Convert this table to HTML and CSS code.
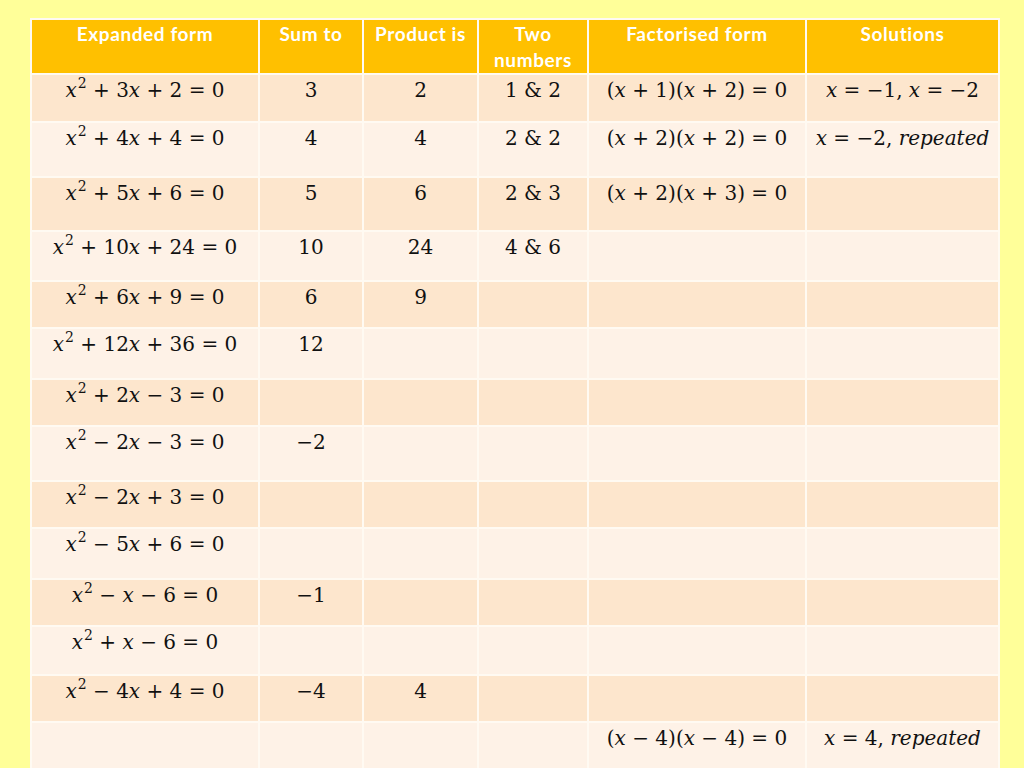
FILE: index.html
```html
<!DOCTYPE html>
<html>
<head>
<meta charset="utf-8">
<link rel="stylesheet" href="styles.css">
</head>
<body>
<table class="grid">
  <colgroup>
    <col class="c-exp"><col class="c-sum"><col class="c-prod"><col class="c-two"><col class="c-fact"><col class="c-sol">
  </colgroup>
  <thead>
    <tr class="head">
      <th>Expanded form</th><th>Sum to</th><th>Product is</th><th>Two numbers</th><th>Factorised form</th><th>Solutions</th>
    </tr>
  </thead>
  <tbody>
    <tr class="dark r1">
      <td><i>x</i><sup>2</sup> + 3<i>x</i> + 2 = 0</td><td>3</td><td>2</td><td>1 &amp; 2</td>
      <td>(<i>x</i> + 1)(<i>x</i> + 2) = 0</td><td><i>x</i> = −1, <i>x</i> = −2</td>
    </tr>
    <tr class="light r2">
      <td><i>x</i><sup>2</sup> + 4<i>x</i> + 4 = 0</td><td>4</td><td>4</td><td>2 &amp; 2</td>
      <td>(<i>x</i> + 2)(<i>x</i> + 2) = 0</td><td><i>x</i> = −2, <i>repeated</i></td>
    </tr>
    <tr class="dark r3">
      <td><i>x</i><sup>2</sup> + 5<i>x</i> + 6 = 0</td><td>5</td><td>6</td><td>2 &amp; 3</td>
      <td>(<i>x</i> + 2)(<i>x</i> + 3) = 0</td><td></td>
    </tr>
    <tr class="light r4">
      <td><i>x</i><sup>2</sup> + 10<i>x</i> + 24 = 0</td><td>10</td><td>24</td><td>4 &amp; 6</td><td></td><td></td>
    </tr>
    <tr class="dark r5">
      <td><i>x</i><sup>2</sup> + 6<i>x</i> + 9 = 0</td><td>6</td><td>9</td><td></td><td></td><td></td>
    </tr>
    <tr class="light r6">
      <td><i>x</i><sup>2</sup> + 12<i>x</i> + 36 = 0</td><td>12</td><td></td><td></td><td></td><td></td>
    </tr>
    <tr class="dark r7">
      <td><i>x</i><sup>2</sup> + 2<i>x</i> − 3 = 0</td><td></td><td></td><td></td><td></td><td></td>
    </tr>
    <tr class="light r8">
      <td><i>x</i><sup>2</sup> − 2<i>x</i> − 3 = 0</td><td>−2</td><td></td><td></td><td></td><td></td>
    </tr>
    <tr class="dark r9">
      <td><i>x</i><sup>2</sup> − 2<i>x</i> + 3 = 0</td><td></td><td></td><td></td><td></td><td></td>
    </tr>
    <tr class="light r10">
      <td><i>x</i><sup>2</sup> − 5<i>x</i> + 6 = 0</td><td></td><td></td><td></td><td></td><td></td>
    </tr>
    <tr class="dark r11">
      <td><i>x</i><sup>2</sup> − <i>x</i> − 6 = 0</td><td>−1</td><td></td><td></td><td></td><td></td>
    </tr>
    <tr class="light r12">
      <td><i>x</i><sup>2</sup> + <i>x</i> − 6 = 0</td><td></td><td></td><td></td><td></td><td></td>
    </tr>
    <tr class="dark r13">
      <td><i>x</i><sup>2</sup> − 4<i>x</i> + 4 = 0</td><td>−4</td><td>4</td><td></td><td></td><td></td>
    </tr>
    <tr class="light r14">
      <td></td><td></td><td></td><td></td>
      <td>(<i>x</i> − 4)(<i>x</i> − 4) = 0</td><td><i>x</i> = 4, <i>repeated</i></td>
    </tr>
  </tbody>
</table>
</body>
</html>
```

FILE: styles.css
```css
html, body {
  margin: 0;
  padding: 0;
}
body {
  background: #ffff99;
  width: 1024px;
  height: 768px;
  overflow: hidden;
}
.grid {
  margin: 18px 0 0 30px;
  width: 970px;
  table-layout: fixed;
  border-collapse: separate;
  border-spacing: 2px;
  background: #fffaf2;
}
.c-exp { width: 226px; }
.c-sum { width: 102px; }
.c-prod { width: 113px; }
.c-two { width: 108px; }
.c-fact { width: 216px; }
.c-sol { width: 191px; }

.grid th, .grid td {
  padding: 0;
  text-align: center;
  vertical-align: top;
  white-space: nowrap;
}
.grid th {
  background: #ffc000;
  color: #ffffff;
  font-family: Lato, "Liberation Sans", sans-serif;
  font-weight: 700;
  font-size: 19px;
  letter-spacing: 0.6px;
  line-height: 26px;
  padding-top: 1px;
  white-space: normal;
}
.head { height: 53px; }

.grid td {
  font-family: "DejaVu Serif", serif;
  font-size: 20px;
  line-height: 24px;
  color: #111111;
  padding-top: 3px;
}
.grid td i {
  font-style: italic;
}
.grid td sup {
  font-size: 14px;
  line-height: 0;
  vertical-align: 9px;
  margin-left: 1px;
  font-style: normal;
}
.dark td { background: #fde6cd; }
.light td { background: #fef2e7; }

.r1 { height: 46px; }
.r2 { height: 53px; }
.r3 { height: 52px; }
.r4 { height: 48px; }
.r5 { height: 45px; }
.r6 { height: 49px; }
.r7 { height: 45px; }
.r8 { height: 53px; }
.r9 { height: 45px; }
.r10 { height: 49px; }
.r11 { height: 45px; }
.r12 { height: 47px; }
.r13 { height: 45px; }
.r14 { height: 60px; }
```
